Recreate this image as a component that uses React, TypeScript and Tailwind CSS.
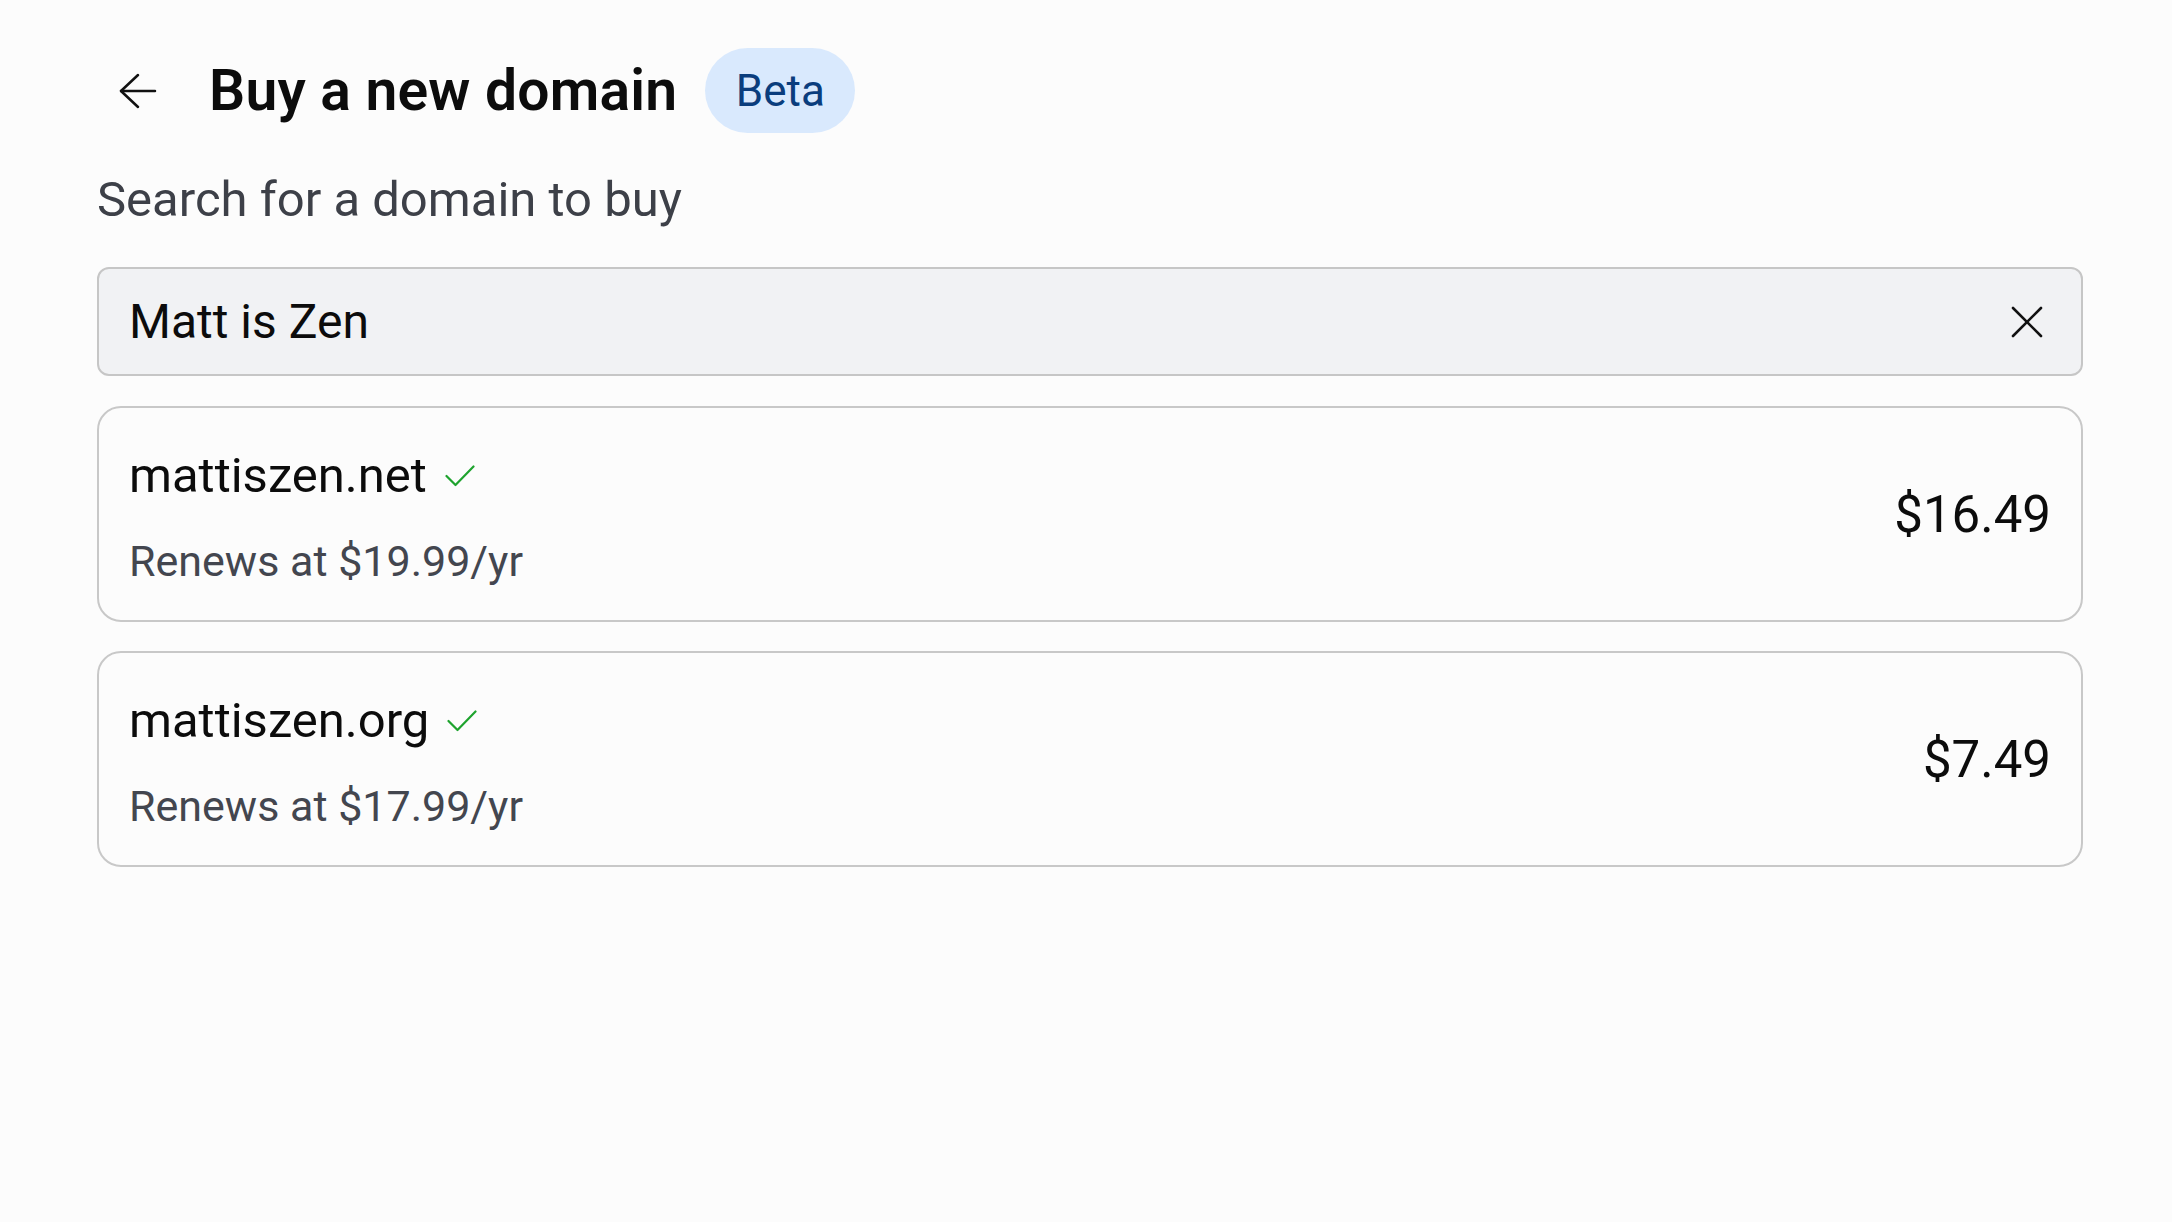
import { useState } from 'react'

const domains = [
  { name: 'mattiszen.net', renew: '$19.99', price: '$16.49' },
  { name: 'mattiszen.org', renew: '$17.99', price: '$7.49' },
]

function BackArrow() {
  return (
    <svg width="38" height="36" viewBox="0 0 38 36" fill="none" stroke="#111" strokeWidth="2.5" strokeLinecap="round" strokeLinejoin="round">
      <path d="M2 18H36" />
      <path d="M19 2L2 18L19 34" />
    </svg>
  )
}

function CloseIcon() {
  return (
    <svg width="32" height="32" viewBox="0 0 32 32" fill="none" stroke="#111" strokeWidth="2.6" strokeLinecap="round">
      <path d="M2 2L30 30" />
      <path d="M30 2L2 30" />
    </svg>
  )
}

function Check() {
  return (
    <svg width="30" height="22" viewBox="0 0 30 22" fill="none" stroke="#1ea32e" strokeWidth="2.2" strokeLinecap="round" strokeLinejoin="round">
      <path d="M1.5 11L10.5 20L28.5 1.5" />
    </svg>
  )
}

export default function App() {
  const [query, setQuery] = useState('Matt is Zen')

  return (
    <div className="min-h-screen bg-[#fcfcfc] pl-[97px] pr-[89px] pt-[48px] text-[#0c0c0c]" style={{ fontFamily: 'Roboto, "Noto Sans", sans-serif' }}>
      {/* Header */}
      <div className="flex h-[85px] items-center">
        <button className="ml-[22px] flex items-center">
          <BackArrow />
        </button>
        <h1 className="ml-[52px] text-[57px] font-semibold leading-none tracking-[0.2px]">Buy a new domain</h1>
        <span className="ml-[28px] flex h-[85px] w-[150px] items-center justify-center rounded-full bg-[#d9e9fd] text-[44px] text-[#0a3d7d]">
          Beta
        </span>
      </div>

      <p className="mt-[37px] text-[49px] leading-[60px] text-[#3d4048]">Search for a domain to buy</p>

      {/* Search input */}
      <div className="mt-[37px] flex h-[109px] items-center rounded-[12px] border-2 border-[#c6c6c6] bg-[#f1f2f4] pl-[30px] pr-[38px]">
        <input
          value={query}
          onChange={(e) => setQuery(e.target.value)}
          className="flex-1 bg-transparent text-[48px] text-[#0c0c0c] outline-none"
        />
        <button onClick={() => setQuery('')} className="flex items-center">
          <CloseIcon />
        </button>
      </div>

      {/* Results */}
      <div className="mt-[30px] flex flex-col gap-[29px]">
        {domains.map((d) => (
          <div key={d.name} className="flex h-[216px] items-center justify-between rounded-[24px] border-2 border-[#c8c8c8] bg-[#fcfcfc] pl-[30px] pr-[30px]">
            <div className="flex flex-col gap-[25px] pt-[5px]">
              <div className="flex items-center gap-[18px]">
                <span className="text-[49px] leading-[64px]">{d.name}</span>
                <Check />
              </div>
              <span className="text-[43px] leading-[56px] text-[#43464f]">Renews at {d.renew}/yr</span>
            </div>
            <span className="text-[51px] leading-none">{d.price}</span>
          </div>
        ))}
      </div>
    </div>
  )
}
